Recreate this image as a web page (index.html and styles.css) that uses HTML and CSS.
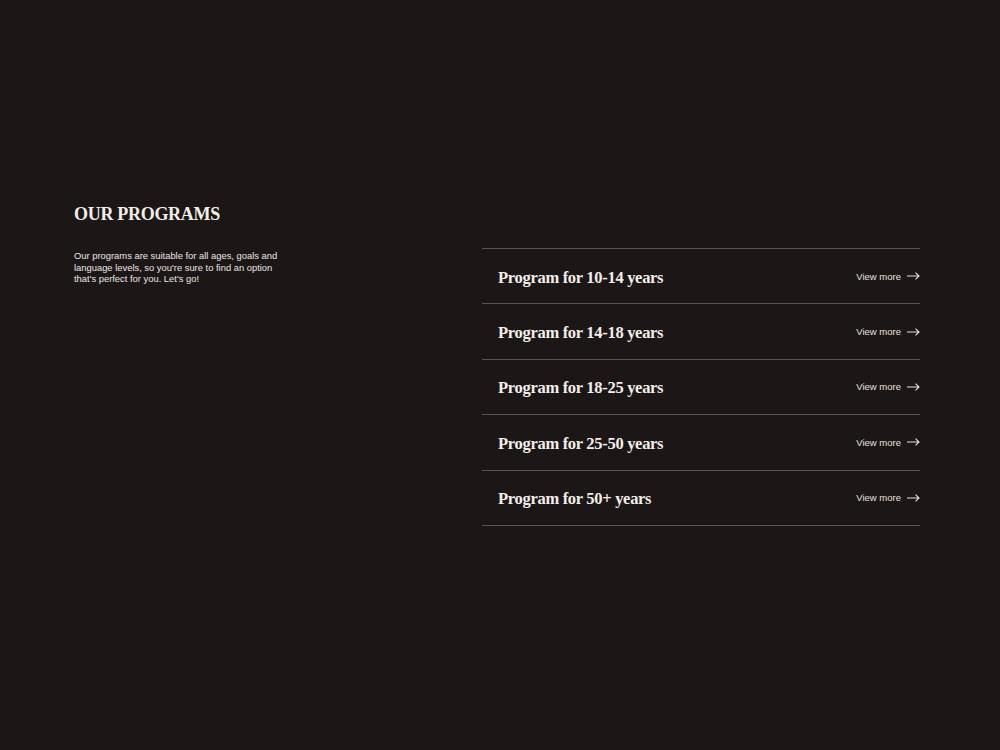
FILE: index.html
```html
<!DOCTYPE html>
<html lang="en">
  <head>
    <meta charset="UTF-8" />
    <meta name="viewport" content="width=device-width, initial-scale=1.0" />
    <title>Our Programs</title>
    <link rel="stylesheet" href="styles.css">
  </head>
  <body>
    <section class="programs">
      <div class="intro">
        <h2>OUR PROGRAMS</h2>
        <p>Our programs are suitable for all ages, goals and language levels, so you're sure to find an option that's perfect for you. Let's go!</p>
      </div>

      <!-- list of programs by age group -->
      <ul class="list">
        <li class="item">
          <span class="name">Program for 10-14 years</span>
          <a class="more" href="#">View more <svg width="13" height="8" viewBox="0 0 13 8"><path d="M0 4h12M8.5 0.7L12 4L8.5 7.3" fill="none" stroke="currentColor" stroke-width="1.1"/></svg></a>
        </li>
        <li class="item">
          <span class="name">Program for 14-18 years</span>
          <a class="more" href="#">View more <svg width="13" height="8" viewBox="0 0 13 8"><path d="M0 4h12M8.5 0.7L12 4L8.5 7.3" fill="none" stroke="currentColor" stroke-width="1.1"/></svg></a>
        </li>
        <li class="item">
          <span class="name">Program for 18-25 years</span>
          <a class="more" href="#">View more <svg width="13" height="8" viewBox="0 0 13 8"><path d="M0 4h12M8.5 0.7L12 4L8.5 7.3" fill="none" stroke="currentColor" stroke-width="1.1"/></svg></a>
        </li>
        <li class="item">
          <span class="name">Program for 25-50 years</span>
          <a class="more" href="#">View more <svg width="13" height="8" viewBox="0 0 13 8"><path d="M0 4h12M8.5 0.7L12 4L8.5 7.3" fill="none" stroke="currentColor" stroke-width="1.1"/></svg></a>
        </li>
        <li class="item">
          <span class="name">Program for 50+ years</span>
          <a class="more" href="#">View more <svg width="13" height="8" viewBox="0 0 13 8"><path d="M0 4h12M8.5 0.7L12 4L8.5 7.3" fill="none" stroke="currentColor" stroke-width="1.1"/></svg></a>
        </li>
      </ul>
    </section>
  </body>
</html>
```

FILE: styles.css
```css
body {
  margin: 0;
  background-color: #1c1717;
  color: #f3eee8;
  font-family: "Liberation Sans", Arial, sans-serif;
  height: 750px;
}
.programs {
  display: flex;
  justify-content: space-between;
  padding: 204px 80px 0 74px;
}
.intro {
  width: 212px;
}
.intro h2 {
  margin: 0;
  font-family: "Liberation Serif", serif;
  font-weight: bold;
  font-size: 18px;
  letter-spacing: -0.3px;
  line-height: 21px;
}
.intro p {
  margin: 25px 0 0;
  font-size: 9.4px;
  line-height: 11.5px;
  color: #ebe6e0;
}
.list {
  list-style: none;
  margin: 44px 0 0;
  padding: 0;
  width: 438px;
  border-top: 1px solid #5a5555;
}
.item {
  display: flex;
  align-items: center;
  justify-content: space-between;
  box-sizing: border-box;
  height: 55.4px;
  padding-left: 16px;
  border-bottom: 1px solid #5a5555;
}
.name {
  padding-top: 3px;
  font-family: "Liberation Serif", serif;
  font-weight: bold;
  font-size: 16.5px;
  letter-spacing: -0.3px;
}
.more {
  display: flex;
  align-items: center;
  gap: 6px;
  color: #e6e1db;
  text-decoration: none;
  font-size: 9.5px;
}
```
